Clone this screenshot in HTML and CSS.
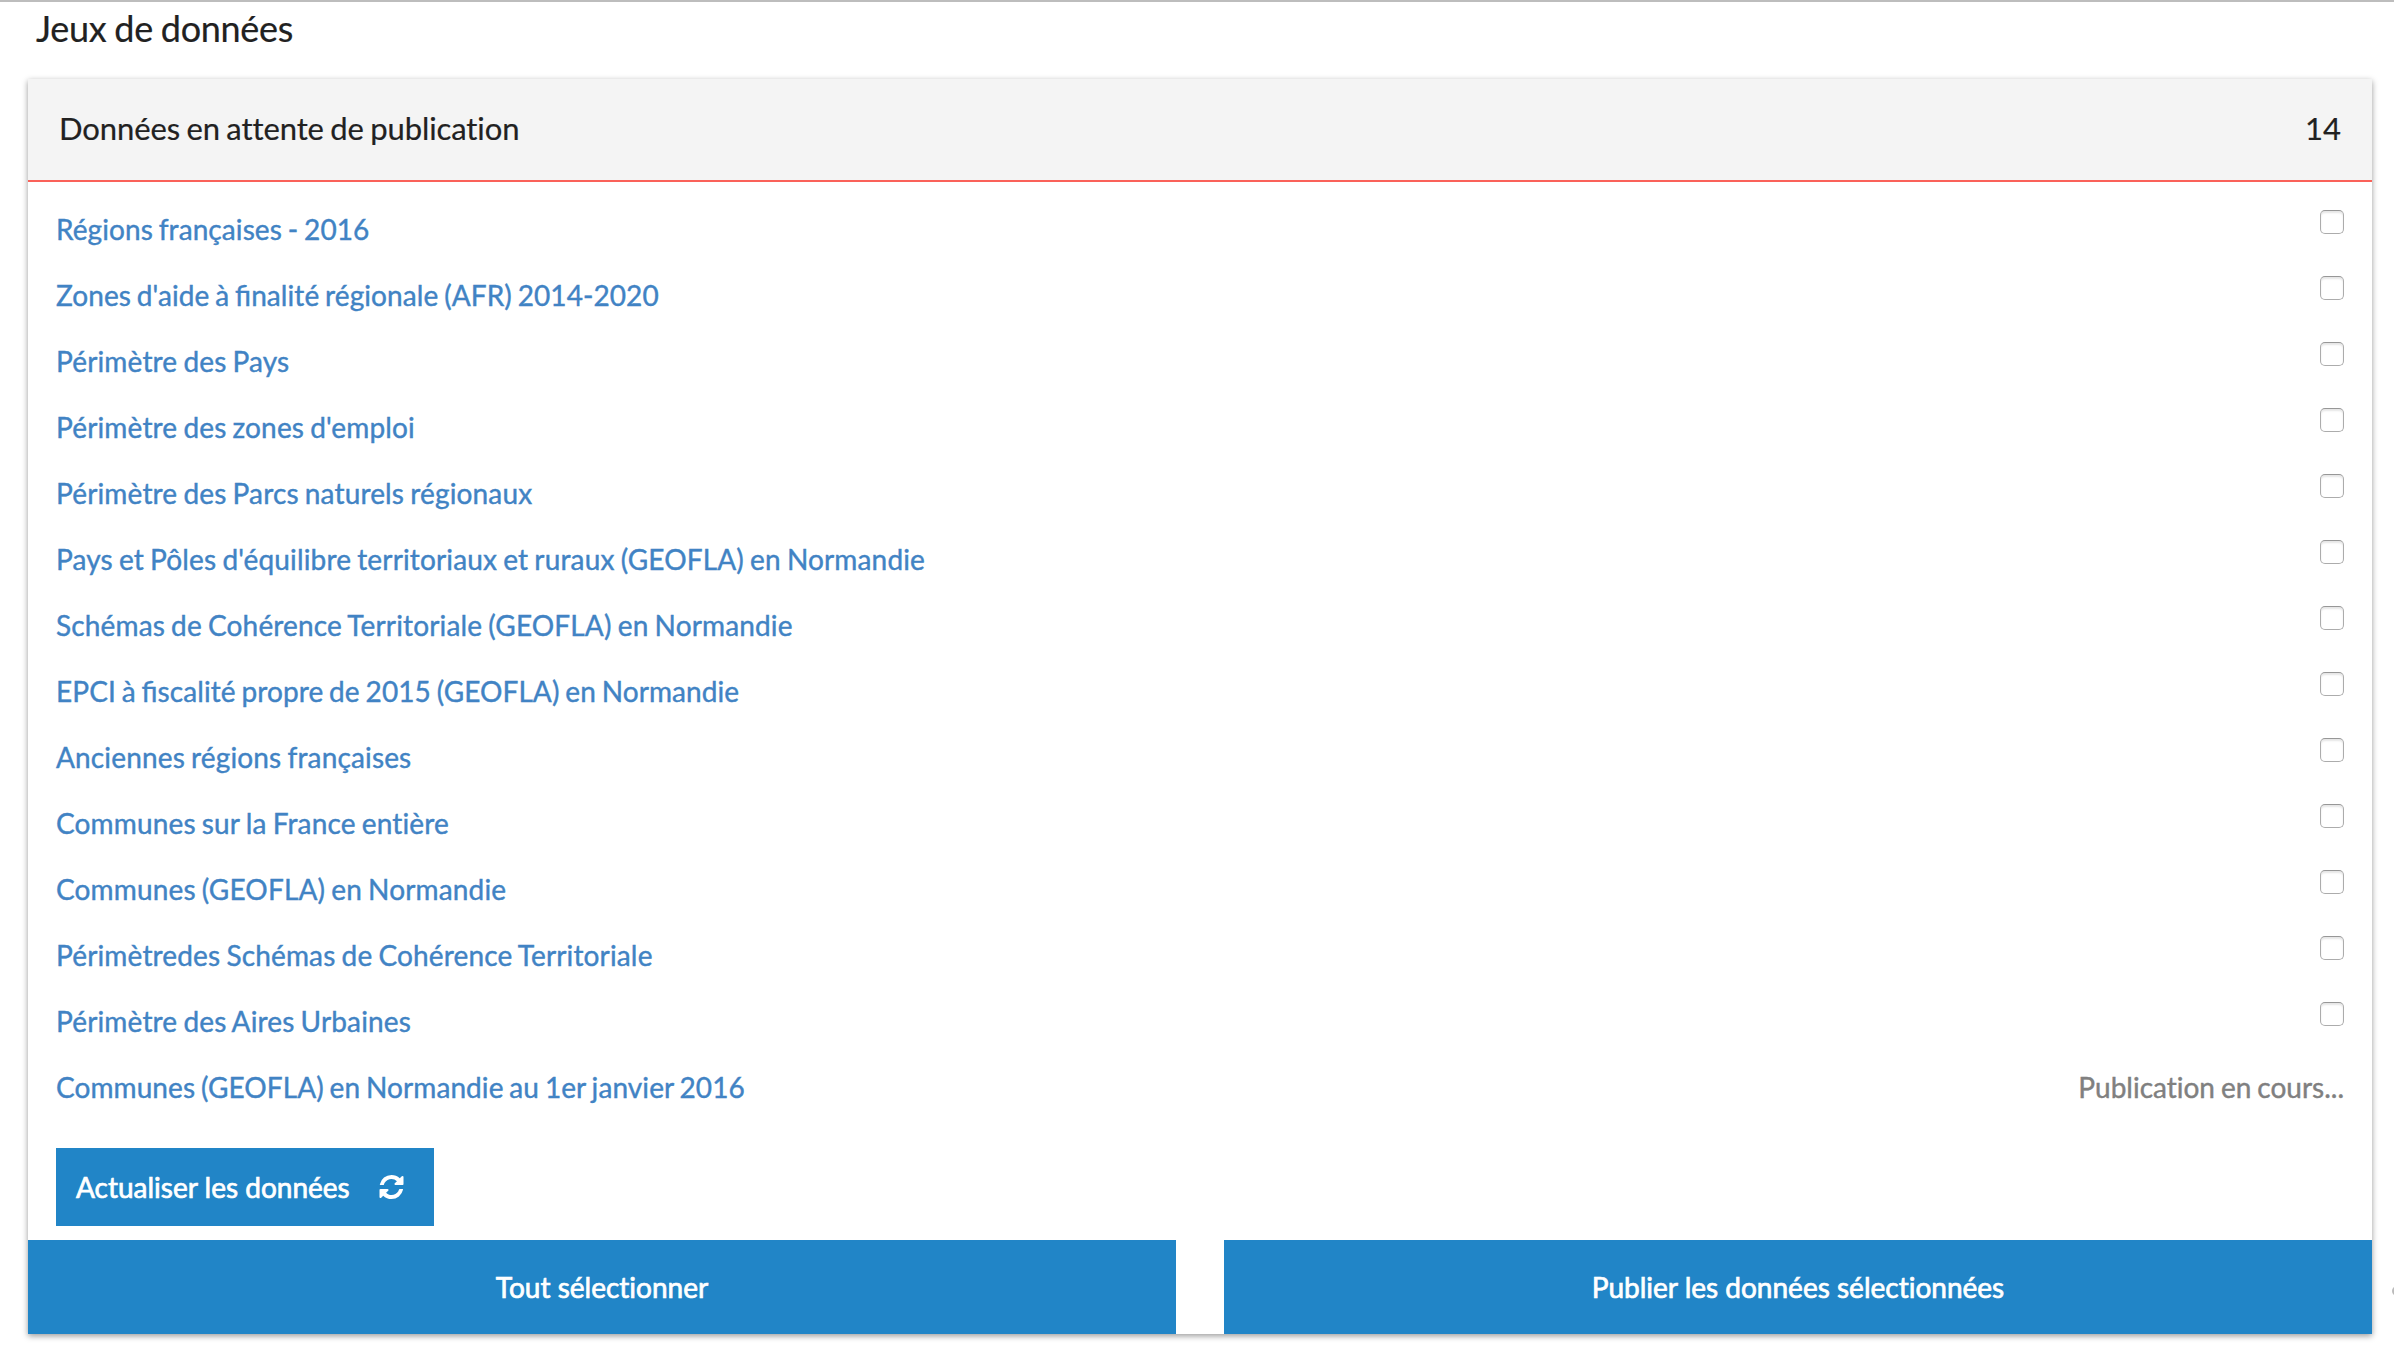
FILE: index.html
```html
<!DOCTYPE html>
<html lang="fr">
<head>
<meta charset="utf-8">
<title>Jeux de données</title>
<link rel="stylesheet" href="styles.css">
</head>
<body>
<main class="page">
  <h1 class="page-title">Jeux de données</h1>
  <section class="card">
    <header class="card-header"><h2 class="card-title">Données en attente de publication</h2><span class="count">14</span></header>
    <div class="card-body">
      <ul class="datasets">
        <li class="row"><a class="link dated">Régions françaises - 2016</a><input class="check" type="checkbox"></li>
        <li class="row"><a class="link dated">Zones d'aide à <span class="lig">fi</span>nalité régionale (AFR) 2014-2020</a><input class="check" type="checkbox"></li>
        <li class="row"><a class="link">Périmètre des Pays</a><input class="check" type="checkbox"></li>
        <li class="row"><a class="link">Périmètre des zones d'emploi</a><input class="check" type="checkbox"></li>
        <li class="row"><a class="link">Périmètre des Parcs naturels régionaux</a><input class="check" type="checkbox"></li>
        <li class="row"><a class="link">Pays et Pôles d'équilibre territoriaux et ruraux (GEOFLA) en Normandie</a><input class="check" type="checkbox"></li>
        <li class="row"><a class="link">Schémas de Cohérence Territoriale (GEOFLA) en Normandie</a><input class="check" type="checkbox"></li>
        <li class="row"><a class="link dated">EPCI à <span class="lig">fi</span>scalité propre de 2015 (GEOFLA) en Normandie</a><input class="check" type="checkbox"></li>
        <li class="row"><a class="link">Anciennes régions françaises</a><input class="check" type="checkbox"></li>
        <li class="row"><a class="link">Communes sur la France entière</a><input class="check" type="checkbox"></li>
        <li class="row"><a class="link">Communes (GEOFLA) en Normandie</a><input class="check" type="checkbox"></li>
        <li class="row"><a class="link">Périmètredes Schémas de Cohérence Territoriale</a><input class="check" type="checkbox"></li>
        <li class="row"><a class="link">Périmètre des Aires Urbaines</a><input class="check" type="checkbox"></li>
        <li class="row"><a class="link dated">Communes (GEOFLA) en Normandie au 1er janvier 2016</a><span class="status">Publication en cours...</span></li>
      </ul>
      <button class="btn btn-refresh" type="button"><span>Actualiser les données</span>
        <svg class="icon" viewBox="0 0 1536 1536" aria-hidden="true"><path fill="currentColor" d="M1511 928q0 5-1 7-64 268-268 434.500T764 1536q-146 0-282.500-55T238 1324l-129 129q-19 19-45 19t-45-19-19-45V960q0-26 19-45t45-19h448q26 0 45 19t19 45-19 45l-137 137q71 66 161 102t187 36q134 0 250-65t186-179q11-17 53-117 8-23 30-23h192q13 0 22.500 9.500t9.500 22.500zM1536 128v448q0 26-19 45t-45 19h-448q-26 0-45-19t-19-45 19-45l138-138Q969 256 768 256q-134 0-250 65T332 500q-11 17-53 117-8 23-30 23H50q-13 0-22.500-9.500T18 608v-7q65-268 270-434.500T768 0q146 0 284 55.500T1297 212l130-129q19-19 45-19t45 19 19 45z"/></svg>
      </button>
    </div>
    <footer class="card-footer">
      <button class="btn" type="button">Tout sélectionner</button>
      <button class="btn" type="button">Publier les données sélectionnées</button>
    </footer>
  </section>
  <span class="edge-dot"></span>
</main>
</body>
</html>
```
FILE: styles.css
```css
* { box-sizing: border-box; }
body {
  margin: 0;
  background: #fff;
  color: #212121;
  font: 28px/40px Lato, "Liberation Sans", sans-serif;
  font-variant-ligatures: none;
}
.page {
  position: relative;
  height: 1346px;
  padding: 0 22px 0 28px;
  border-top: 2px solid #bdbdbd;
  overflow: hidden;
}
.page-title {
  margin: 0;
  height: 77px;
  padding: 6px 0 0 8px;
  font-size: 36px;
  font-weight: 400;
  line-height: 40px;
  letter-spacing: -.3px;
  word-spacing: -1px;
  -webkit-text-stroke: .2px currentColor;
}
.card {
  display: flex;
  flex-direction: column;
  height: 1255px;
  background: #fff;
  box-shadow: 0 2px 6px rgba(0, 0, 0, .4);
}
.card-header {
  display: flex;
  justify-content: space-between;
  height: 103px;
  padding: 29px 31px 0;
  background: #f4f4f4;
  border-bottom: 2px solid #fa6159;
  font-size: 31px;
  -webkit-text-stroke: .2px currentColor;
}
.card-title {
  margin: 0;
  font-size: inherit;
  font-weight: 400;
  letter-spacing: -.1px;
  word-spacing: -1.4px;
}
.card-body { flex: 1; padding: 28px 28px 0; }
.datasets { margin: 0; padding: 0; list-style: none; }
.row { display: flex; justify-content: space-between; height: 66px; }
.link, .status { margin-top: -1px; -webkit-text-stroke: .4px currentColor; }
.link { color: #4183c4; letter-spacing: .15px; word-spacing: -1.2px; }
.dated { letter-spacing: .08px; word-spacing: -1.4px; }
.lig { letter-spacing: 0; font-variant-ligatures: common-ligatures; }
.status { color: gray; word-spacing: -1.2px; }
.check {
  appearance: none;
  width: 24px;
  height: 24px;
  margin: 0;
  border: 1px solid #acacac;
  border-top-color: #979797;
  border-radius: 5px;
  background: #fff;
  box-shadow: inset 0 2px 2px #e6e6e6;
}
.btn {
  display: flex;
  align-items: center;
  justify-content: center;
  margin: 0;
  padding: 0;
  border: 0;
  background: #2185c7;
  color: #fff;
  font: inherit;
  font-variant-ligatures: none;
  -webkit-text-stroke: .7px currentColor;
}
.btn-refresh {
  justify-content: space-between;
  width: 378px;
  height: 78px;
  margin-top: 14px;
  padding: 0 30px 0 20px;
}
.icon { width: 25px; height: 24px; }
.card-footer { display: grid; grid-template-columns: 1fr 1fr; gap: 48px; height: 94px; }
.edge-dot {
  position: absolute;
  left: 2392px;
  top: 1284px;
  width: 10px;
  height: 10px;
  border-radius: 50%;
  background: #bbb;
}
```
